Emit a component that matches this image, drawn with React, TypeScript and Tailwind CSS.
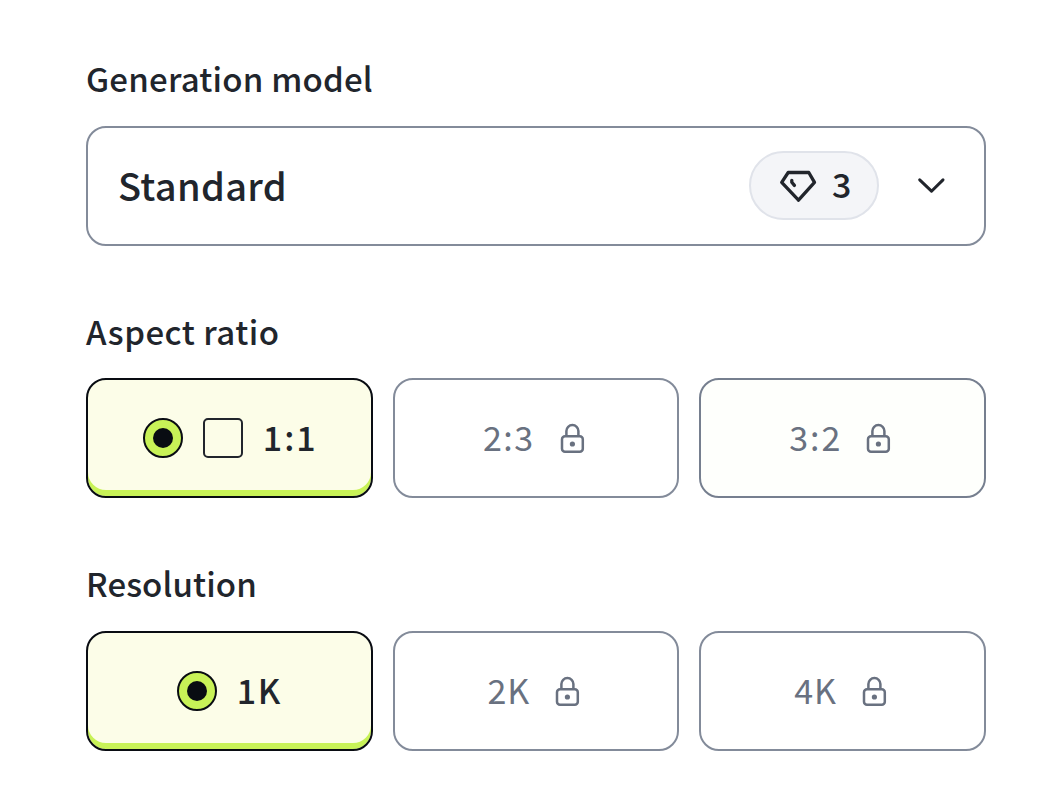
import type { ReactNode } from "react";

function GemIcon() {
  return (
    <svg width="40" height="40" viewBox="0 0 40 40" fill="none" stroke="#21252c" strokeWidth="3.3" strokeLinecap="round" strokeLinejoin="round">
      <path d="M9.2 6.5H29.8L35.5 16.4L19.5 34.2L2.7 16.4Z" />
      <path d="M12.8 14.3V16.2L15.4 19.4" />
    </svg>
  );
}

function ChevronIcon() {
  return (
    <svg width="40" height="40" viewBox="0 0 40 40" fill="none" stroke="#21252c" strokeWidth="3" strokeLinecap="round" strokeLinejoin="round">
      <path d="M8.7 13.9L20.5 25.2L32 13.9" />
    </svg>
  );
}

function LockIcon() {
  return (
    <svg className="shrink-0" width="40" height="40" viewBox="0 0 40 40" fill="none" stroke="#697180" strokeWidth="2.5">
      <rect x="10" y="18.3" width="20.8" height="15.4" rx="3" />
      <path d="M14.4 18V13.1a6 6 0 0 1 12 0V18" />
      <circle cx="20.4" cy="26" r="2.6" fill="#697180" stroke="none" />
    </svg>
  );
}

function Radio() {
  return (
    <span className="flex size-10 shrink-0 items-center justify-center rounded-full border-2 border-[#090c12] bg-[#c8f257]">
      <span className="size-5 rounded-full bg-[#090c12]" />
    </span>
  );
}

function Section({ title, heading, children }: { title: string; heading: string; children: ReactNode }) {
  return (
    <section>
      <h2 className={`h-10 text-[33px] leading-9 font-medium whitespace-nowrap ${heading}`}>{title}</h2>
      {children}
    </section>
  );
}

function Selected({ label, text, square }: { label: string; text: string; square?: boolean }) {
  return (
    <button className="flex h-[120px] items-center justify-center gap-5 rounded-[20px] border-2 border-[#090c12] bg-[#fcfde8] shadow-[inset_0_-6px_0_#c8f257]">
      <Radio />
      {square && <span className="size-10 shrink-0 rounded-[5px] border-2 border-[#21252c]" />}
      <span className={`h-10 text-left text-[34px] leading-[38px] font-medium whitespace-nowrap ${text}`}>{label}</span>
    </button>
  );
}

function Locked({ label, text, tone = "border-[#838b9a]" }: { label: string; text: string; tone?: string }) {
  return (
    <button className={`flex h-[120px] items-center justify-center gap-5 rounded-[20px] border-2 text-[#697180] ${tone}`}>
      <span className={`h-10 text-left text-[34px] leading-[38px] whitespace-nowrap ${text}`}>{label}</span>
      <LockIcon />
    </button>
  );
}

export default function App() {
  return (
    <main className="flex h-[806px] w-[1062px] flex-col overflow-hidden bg-white pt-[60px] pl-[86px] font-['Noto_Sans_CJK_SC',sans-serif] text-[#21252c]">
      <div className="w-[900px]">
        <Section title="Generation model" heading="mb-[26px] tracking-[0.2px]">
          <button className="flex h-[120px] w-full items-center rounded-[20px] border-2 border-[#838b9a] pr-[33px] pl-[30px]">
            <span className="flex-1 pb-0.5 text-left text-[38px] leading-[48px] font-medium tracking-[0.3px]">Standard</span>
            <span className="mr-8 mb-px flex h-[69px] w-[130px] items-center gap-[13px] rounded-full border-2 border-[#e0e3ea] bg-[#f4f5f8] pl-7 text-[34px] leading-10 font-medium">
              <GemIcon />
              <span className="pb-[3px]">3</span>
            </span>
            <ChevronIcon />
          </button>
        </Section>
        <Section title="Aspect ratio" heading="mt-[67px] mb-[25px] tracking-[0.5px]">
          <div className="grid grid-cols-3 gap-5">
            <Selected label="1:1" text="w-[53px] tracking-[2px]" square />
            <Locked label="2:3" text="w-[52px] pl-[3px] tracking-[1.5px]" />
            <Locked label="3:2" text="w-[51px] pl-[2px] tracking-[2px]" tone="border-[#767f8f] bg-[#fefffc]" />
          </div>
        </Section>
        <Section title="Resolution" heading="mt-[67px] mb-[26px] tracking-[0.1px]">
          <div className="grid grid-cols-3 gap-5">
            <Selected label="1K" text="w-[45px] tracking-[1.5px]" />
            <Locked label="2K" text="w-[43px] pl-[3px] tracking-[1px]" />
            <Locked label="4K" text="w-[43px] pl-[3px] tracking-[1px]" />
          </div>
        </Section>
      </div>
    </main>
  );
}
